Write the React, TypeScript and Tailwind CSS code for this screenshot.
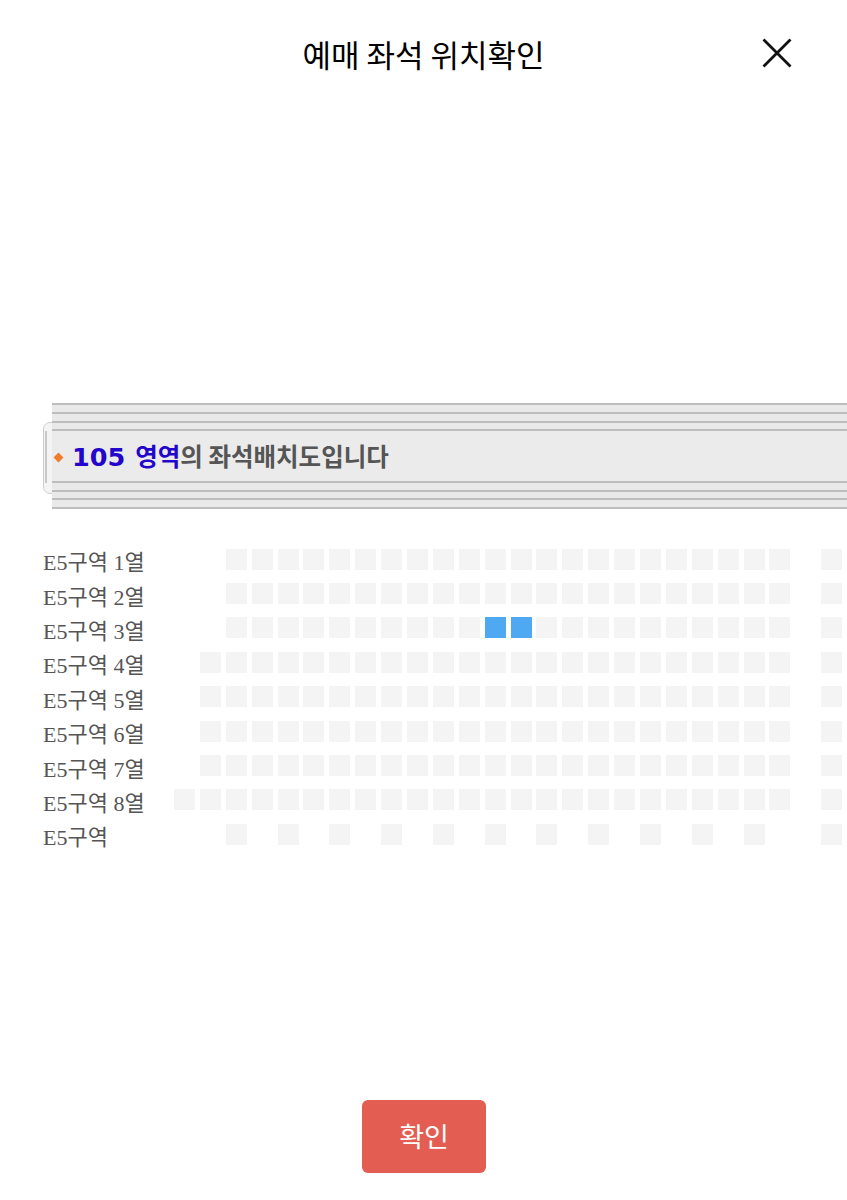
import React from "react";

const ROWS: { label: string; cols: number[]; blue?: number[] }[] = (() => {
  const range = (a: number, b: number) => Array.from({ length: b - a + 1 }, (_, i) => a + i);
  return [
    { label: "E5구역 1열", cols: [...range(2, 23), 25] },
    { label: "E5구역 2열", cols: [...range(2, 23), 25] },
    { label: "E5구역 3열", cols: [...range(2, 23), 25], blue: [12, 13] },
    { label: "E5구역 4열", cols: [...range(1, 23), 25] },
    { label: "E5구역 5열", cols: [...range(1, 23), 25] },
    { label: "E5구역 6열", cols: [...range(1, 23), 25] },
    { label: "E5구역 7열", cols: [...range(1, 23), 25] },
    { label: "E5구역 8열", cols: [...range(0, 23), 25] },
    { label: "E5구역", cols: [2, 4, 6, 8, 10, 12, 14, 16, 18, 20, 22, 25] },
  ];
})();

function Line() {
  return <div className="h-[2px] bg-[#bdbdbd]" />;
}
function Band({ h }: { h: string }) {
  return <div className={`${h} bg-[#e9e9e9]`} />;
}

export default function App() {
  return (
    <div className="w-[847px] h-[1200px] bg-white flex flex-col overflow-hidden" style={{ fontFamily: '"Noto Sans CJK KR", sans-serif' }}>
      {/* header */}
      <div className="relative h-[106px] flex items-center justify-center">
        <div className="text-[31px] text-black leading-none" style={{ fontFamily: '"Noto Sans CJK KR", sans-serif' }}>
          예매 좌석 위치확인
        </div>
        <svg className="absolute left-[762px] top-[38px]" width="30" height="30" viewBox="0 0 30 30">
          <path d="M1.5 1.5 L28.5 28.5 M28.5 1.5 L1.5 28.5" stroke="#111" strokeWidth="2.8" strokeLinecap="butt" fill="none" />
        </svg>
      </div>

      {/* banner */}
      <div className="relative mt-[297px] ml-[52px]">
        <div className="absolute left-[-9px] top-[19px] w-[14px] h-[72px] rounded-l-[7px] border border-[#cfcfcf] bg-[#f4f4f4]" />
        <div className="absolute left-[-7px] top-[28px] w-[2px] h-[52px] bg-[#c8c8c8]" />
        <div className="relative flex flex-col">
          <Line />
          <Band h="h-[7px]" />
          <Line />
          <Band h="h-[7px]" />
          <Line />
          <Band h="h-[6px]" />
          <Line />
          <div className="h-[50px] bg-[#ebebeb] flex items-center">
            <div className="ml-[3px] w-[7px] h-[7px] rotate-45 bg-[#ef7b2b] mt-[2px]" />
            <div className="ml-[10px] flex items-baseline font-bold mt-[2px]">
              <span className="text-[25.5px] text-[#2306c9]" style={{ fontFamily: '"DejaVu Sans", "Noto Sans CJK KR", sans-serif' }}>
                105
              </span>
              <span className="ml-[10px] text-[24.5px] text-[#2306c9]" style={{ fontFamily: '"Noto Sans CJK KR", sans-serif' }}>
                영역
              </span>
              <span className="text-[24.5px] text-[#555555]" style={{ fontFamily: '"Noto Sans CJK KR", sans-serif' }}>
                의 좌석배치도입니다
              </span>
            </div>
          </div>
          <Line />
          <Band h="h-[7px]" />
          <Line />
          <Band h="h-[6px]" />
          <Line />
          <Band h="h-[7px]" />
          <Line />
        </div>
      </div>

      {/* seats */}
      <div className="mt-[33px] flex flex-col">
        {ROWS.map((row, ri) => (
          <div key={ri} className="h-[34.4px] flex items-center">
            <div
              className="w-[174px] shrink-0 pl-[43px] mt-[8px] text-[22px] text-[#555555] leading-none whitespace-nowrap"
              style={{ fontFamily: '"Liberation Serif", "Noto Sans CJK KR", serif' }}
            >
              {row.label}
            </div>
            <div className="grid grid-cols-[repeat(26,25.9px)] shrink-0">
              {Array.from({ length: 26 }, (_, ci) => {
                const has = row.cols.includes(ci);
                const blue = row.blue?.includes(ci);
                return (
                  <div key={ci} className="h-[21px]">
                    {has && (
                      <div className={`w-[21px] h-[21px] ${blue ? "bg-[#4fa9f2]" : "bg-[#f4f4f4]"}`} />
                    )}
                  </div>
                );
              })}
            </div>
          </div>
        ))}
      </div>

      {/* button */}
      <div className="mt-[248px] flex justify-center">
        <button className="ml-[1px] w-[124px] h-[73px] rounded-[6px] bg-[#e45d52] text-white text-[27px] flex items-center justify-center">
          확인
        </button>
      </div>
    </div>
  );
}
